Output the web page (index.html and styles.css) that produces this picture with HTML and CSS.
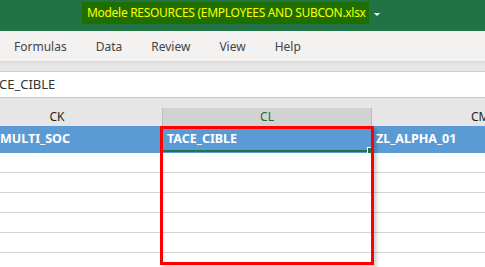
FILE: index.html
```html
<!DOCTYPE html>
<html>
<head>
  <link rel="stylesheet" href="styles.css">
</head>
<body>
  <div class="titlebar">
    <span class="doc-title">Modele RESOURCES (EMPLOYEES AND SUBCON.xlsx</span>
    <span class="doc-caret"></span>
  </div>
  <div class="ribbon">
    <span class="tab">Formulas</span>
    <span class="tab">Data</span>
    <span class="tab">Review</span>
    <span class="tab">View</span>
    <span class="tab">Help</span>
  </div>
  <div class="ribbon-shadow"></div>
  <div class="formula-bar">CE_CIBLE</div>
  <div class="sheet">
    <div class="col-headers">
      <div class="col-head">CK</div>
      <div class="col-head selected">CL</div>
      <div class="col-head cm">CM</div>
    </div>
    <div class="row head-row">
      <div class="cell first">MULTI_SOC</div>
      <div class="cell active">TACE_CIBLE<span class="fill-handle"></span></div>
      <div class="cell last">ZL_ALPHA_01</div>
    </div>
    <div class="row"><div class="cell"></div><div class="cell"></div><div class="cell"></div></div>
    <div class="row"><div class="cell"></div><div class="cell"></div><div class="cell"></div></div>
    <div class="row"><div class="cell"></div><div class="cell"></div><div class="cell"></div></div>
    <div class="row"><div class="cell"></div><div class="cell"></div><div class="cell"></div></div>
    <div class="row"><div class="cell"></div><div class="cell"></div><div class="cell"></div></div>
    <div class="row"><div class="cell"></div><div class="cell"></div><div class="cell"></div></div>
    <div class="highlight"></div>
  </div>
</body>
</html>
```

FILE: styles.css
```css
body {
  margin: 0;
  width: 485px;
  height: 267px;
  overflow: hidden;
  font-family: "Noto Sans", "Open Sans", sans-serif;
  background: #fff;
}
.titlebar {
  height: 31px;
  background: #217346;
  display: flex;
  align-items: flex-start;
  padding-left: 82px;
}
.doc-title {
  margin-top: 2px;
  height: 22px;
  line-height: 22px;
  padding: 0 3px 0 5px;
  background: #1e6f00;
  color: #ffff00;
  font-size: 12px;
  letter-spacing: -0.3px;
  white-space: nowrap;
}
.doc-caret {
  margin: 13px 0 0 5px;
  width: 0;
  height: 0;
  border-left: 3px solid transparent;
  border-right: 3px solid transparent;
  border-top: 3px solid #fff;
}
.ribbon {
  height: 30px;
  background: #f3f2f1;
  display: flex;
  align-items: center;
  padding-left: 14px;
  gap: 29px;
}
.tab {
  font-size: 12px;
  color: #444;
}
.ribbon-shadow {
  height: 10px;
  background: linear-gradient(#d9d9d9, #e8e8e8 40%, #e6e6e6);
  border-bottom: 1px solid #d0d0d0;
}
.formula-bar {
  height: 25px;
  line-height: 25px;
  background: #fff;
  border-bottom: 1px solid #c8c8c8;
  font-size: 13px;
  color: #333;
  margin-left: -1px;
}
.sheet {
  position: relative;
  background: #e6e6e6;
  padding-top: 10px;
}
.col-headers,
.row {
  display: grid;
  grid-template-columns: 210px 210px 210px;
  margin-left: -48px;
}
.col-head {
  height: 18px;
  line-height: 18px;
  text-align: center;
  font-size: 12px;
  color: #222;
  background: #e6e6e6;
}
.col-head.selected {
  background: #d2d2d2;
  color: #1d6b3e;
  border-left: 1px solid #bdbdbd;
  border-right: 1px solid #bdbdbd;
}
.col-head.cm {
  text-align: left;
  padding-left: 99px;
}
.row {
  height: 20px;
  background: #fff;
  border-bottom: 1px solid #d4d4d4;
  box-sizing: border-box;
}
.head-row {
  height: 27px;
  background: #5b9bd5;
  border-bottom: 1px solid #5b9bd5;
}
.head-row .cell {
  color: #fff;
  font-weight: bold;
  font-size: 12.5px;
  line-height: 26px;
}
.cell {
  overflow: hidden;
  white-space: nowrap;
}
.cell.first {
  padding-left: 48px;
}
.cell.active {
  position: relative;
  padding-left: 4px;
  border: 1px solid #fff;
  border-bottom: 2px solid #217346;
  line-height: 23px;
  overflow: visible;
}
.cell.last {
  padding-left: 4px;
}
.fill-handle {
  position: absolute;
  right: -3px;
  bottom: -4px;
  width: 5px;
  height: 5px;
  background: #217346;
  border: 1px solid #fff;
}
.highlight {
  position: absolute;
  left: 160px;
  top: 28px;
  width: 208px;
  height: 133px;
  border: 3px solid #ff0000;
  box-shadow: 3px 3px 3px rgba(0, 0, 0, 0.18);
}
```
